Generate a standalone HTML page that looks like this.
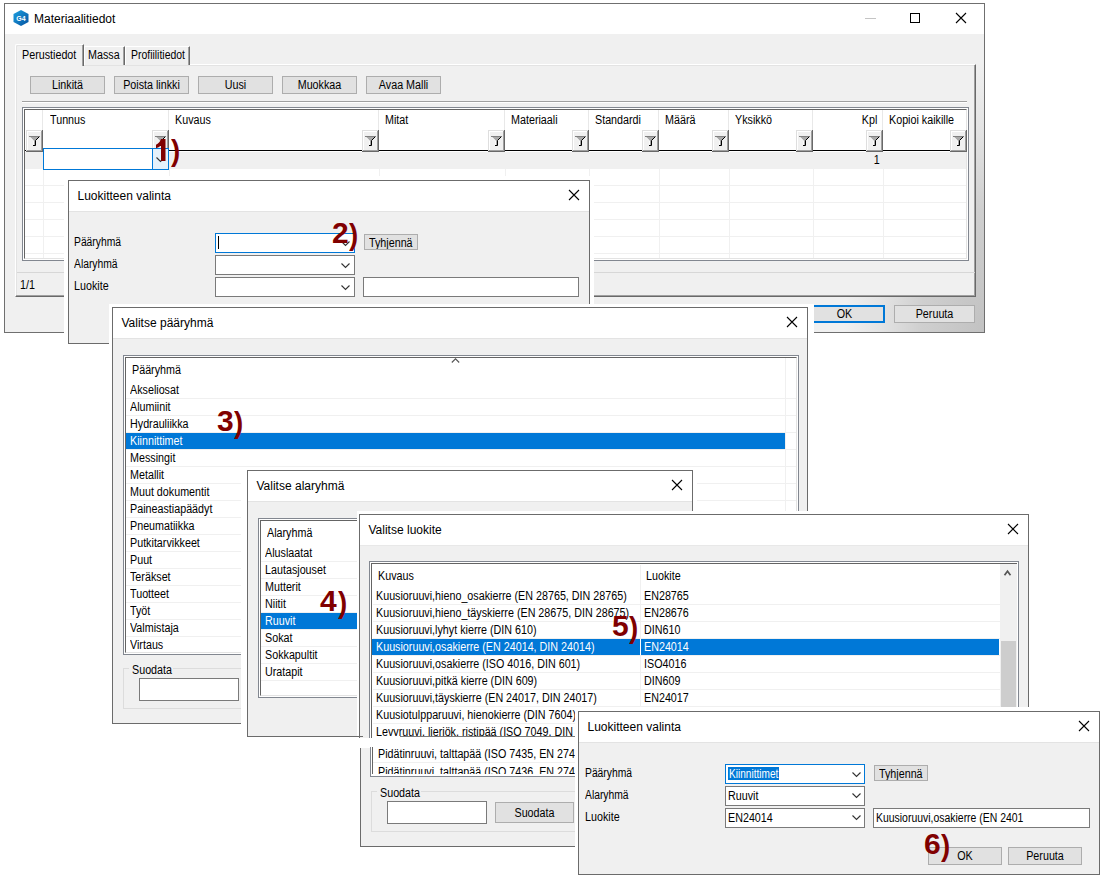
<!DOCTYPE html>
<html><head><meta charset="utf-8"><style>
html,body{margin:0;padding:0;}
body{width:1100px;height:878px;position:relative;overflow:hidden;background:#fff;font-family:"Liberation Sans",sans-serif;}
body>div,body>span,body>svg{position:absolute;}
.t{white-space:pre;}
</style></head><body>
<div style="left:4px;top:3px;width:981px;height:330px;background:radial-gradient(ellipse 140px 270px at 100% 100%,#c2c2c2 0%,#cfcfcf 45%,#e4e4e4 75%,#f0f0f0 100%);border:1px solid #6f6f6f;box-sizing:border-box"></div>
<div style="left:5px;top:4px;width:979px;height:30px;background:#fff"></div>
<svg style="left:13px;top:10px" width="16" height="16"><defs><linearGradient id="g4" x1="0" y1="0" x2="1" y2="1"><stop offset="0" stop-color="#1ea0e0"/><stop offset="1" stop-color="#0452a0"/></linearGradient></defs><path d="M8 0L15.5 4V12L8 16L0.5 12V4Z" fill="url(#g4)"/><text x="8" y="11" font-family="Liberation Sans" font-size="7" font-weight="bold" fill="#fff" text-anchor="middle">G4</text></svg>
<span class="t" style="left:34px;top:12.84px;font-size:12px;line-height:12px;color:#000;letter-spacing:0px;font-weight:normal;transform:scaleX(1.0);transform-origin:0 0;">Materiaalitiedot</span>
<div style="left:865px;top:18px;width:11px;height:1px;background:#c4c4c4"></div>
<div style="left:910px;top:13px;width:10px;height:10px;border:1px solid #000;box-sizing:border-box"></div>
<svg style="left:955.0px;top:12.0px" width="12" height="12"><path d="M1 1L11 11M11 1L1 11" stroke="#000" stroke-width="1.1" fill="none"/></svg>
<div style="left:15px;top:64px;width:961px;height:233px;background:#f0f0f0;border-top:1px solid #fff;border-left:1px solid #fff;border-right:1px solid #696969;border-bottom:1px solid #696969;box-shadow:inset -1px -1px 0 #a0a0a0,inset 1px 1px 0 #e3e3e3;box-sizing:border-box"></div>
<div style="left:84px;top:46px;width:41px;height:19px;background:#f0f0f0;border-top:1px solid #fff;border-left:1px solid #fff;border-right:1px solid #696969;box-shadow:inset -1px 0 0 #a0a0a0;box-sizing:border-box"></div>
<div style="left:125px;top:46px;width:65px;height:19px;background:#f0f0f0;border-top:1px solid #fff;border-left:1px solid #fff;border-right:1px solid #696969;box-shadow:inset -1px 0 0 #a0a0a0;box-sizing:border-box"></div>
<div style="left:15px;top:44px;width:69px;height:22px;background:#f0f0f0;border-top:1px solid #fff;border-left:1px solid #fff;border-right:1px solid #696969;border-top-left-radius:2px;box-shadow:inset -1px 0 0 #a0a0a0,inset 1px 1px 0 #e3e3e3;box-sizing:border-box"></div>
<span class="t" style="left:22px;top:48.84px;font-size:12px;line-height:12px;color:#000;letter-spacing:0px;font-weight:normal;transform:scaleX(0.895);transform-origin:0 0;">Perustiedot</span>
<span class="t" style="left:87.5px;top:48.84px;font-size:12px;line-height:12px;color:#000;letter-spacing:0px;font-weight:normal;transform:scaleX(0.895);transform-origin:0 0;">Massa</span>
<span class="t" style="left:130.5px;top:48.84px;font-size:12px;line-height:12px;color:#000;letter-spacing:0px;font-weight:normal;transform:scaleX(0.87);transform-origin:0 0;">Profiilitiedot</span>
<div style="left:30px;top:76px;width:75px;height:18px;background:#e1e1e1;border:1px solid #adadad;box-sizing:border-box"></div>
<span class="t" style="left:30px;top:78.84px;font-size:12px;line-height:12px;color:#000;letter-spacing:0px;font-weight:normal;transform:scaleX(0.895);transform-origin:50% 0;width:75px;text-align:center;">Linkitä</span>
<div style="left:114px;top:76px;width:75px;height:18px;background:#e1e1e1;border:1px solid #adadad;box-sizing:border-box"></div>
<span class="t" style="left:114px;top:78.84px;font-size:12px;line-height:12px;color:#000;letter-spacing:0px;font-weight:normal;transform:scaleX(0.895);transform-origin:50% 0;width:75px;text-align:center;">Poista linkki</span>
<div style="left:198px;top:76px;width:75px;height:18px;background:#e1e1e1;border:1px solid #adadad;box-sizing:border-box"></div>
<span class="t" style="left:198px;top:78.84px;font-size:12px;line-height:12px;color:#000;letter-spacing:0px;font-weight:normal;transform:scaleX(0.895);transform-origin:50% 0;width:75px;text-align:center;">Uusi</span>
<div style="left:282px;top:76px;width:75px;height:18px;background:#e1e1e1;border:1px solid #adadad;box-sizing:border-box"></div>
<span class="t" style="left:282px;top:78.84px;font-size:12px;line-height:12px;color:#000;letter-spacing:0px;font-weight:normal;transform:scaleX(0.895);transform-origin:50% 0;width:75px;text-align:center;">Muokkaa</span>
<div style="left:366px;top:76px;width:75px;height:18px;background:#e1e1e1;border:1px solid #adadad;box-sizing:border-box"></div>
<span class="t" style="left:366px;top:78.84px;font-size:12px;line-height:12px;color:#000;letter-spacing:0px;font-weight:normal;transform:scaleX(0.895);transform-origin:50% 0;width:75px;text-align:center;">Avaa Malli</span>
<div style="left:22px;top:101px;width:945px;height:1px;background:#a0a0a0"></div>
<div style="left:22px;top:102px;width:945px;height:1px;background:#fff"></div>
<div style="left:22px;top:107px;width:947px;height:154px;background:#fff;border:1px solid #828790;box-sizing:border-box"></div>
<div style="left:24px;top:109px;width:943px;height:150px;background:#fff;border-left:1px solid #646464;border-top:1px solid #646464;border-right:1px solid #e3e3e3;border-bottom:1px solid #e3e3e3;box-sizing:border-box"></div>
<div style="left:25px;top:152px;width:941px;height:17px;background:#f0f0f0"></div>
<div style="left:25px;top:185px;width:941px;height:1px;background:#f0f0f0"></div>
<div style="left:25px;top:202px;width:941px;height:1px;background:#f0f0f0"></div>
<div style="left:25px;top:219px;width:941px;height:1px;background:#f0f0f0"></div>
<div style="left:25px;top:236px;width:941px;height:1px;background:#f0f0f0"></div>
<div style="left:25px;top:253px;width:941px;height:1px;background:#f0f0f0"></div>
<div style="left:42px;top:110px;width:1px;height:41px;background:#e8e8e8"></div>
<div style="left:43px;top:169px;width:1px;height:89px;background:#f0f0f0"></div>
<div style="left:168px;top:110px;width:1px;height:41px;background:#e8e8e8"></div>
<div style="left:169px;top:169px;width:1px;height:89px;background:#f0f0f0"></div>
<div style="left:378px;top:110px;width:1px;height:41px;background:#e8e8e8"></div>
<div style="left:379px;top:169px;width:1px;height:89px;background:#f0f0f0"></div>
<div style="left:504px;top:110px;width:1px;height:41px;background:#e8e8e8"></div>
<div style="left:505px;top:169px;width:1px;height:89px;background:#f0f0f0"></div>
<div style="left:588px;top:110px;width:1px;height:41px;background:#e8e8e8"></div>
<div style="left:589px;top:169px;width:1px;height:89px;background:#f0f0f0"></div>
<div style="left:658px;top:110px;width:1px;height:41px;background:#e8e8e8"></div>
<div style="left:659px;top:169px;width:1px;height:89px;background:#f0f0f0"></div>
<div style="left:728px;top:110px;width:1px;height:41px;background:#e8e8e8"></div>
<div style="left:729px;top:169px;width:1px;height:89px;background:#f0f0f0"></div>
<div style="left:812px;top:110px;width:1px;height:41px;background:#e8e8e8"></div>
<div style="left:813px;top:169px;width:1px;height:89px;background:#f0f0f0"></div>
<div style="left:882px;top:110px;width:1px;height:41px;background:#e8e8e8"></div>
<div style="left:883px;top:169px;width:1px;height:89px;background:#f0f0f0"></div>
<div style="left:25px;top:150px;width:941px;height:1px;background:#000"></div>
<div style="left:26px;top:130px;width:17px;height:22px;background:#f0f0f0"></div>
<div style="left:26px;top:130px;width:1px;height:22px;background:#dedede"></div>
<div style="left:26px;top:130px;width:17px;height:1px;background:#dedede"></div>
<div style="left:27px;top:131px;width:1px;height:20px;background:#fff"></div>
<div style="left:27px;top:131px;width:15px;height:1px;background:#fff"></div>
<div style="left:41px;top:131px;width:1px;height:20px;background:#a0a0a0"></div>
<div style="left:27px;top:150px;width:15px;height:1px;background:#a0a0a0"></div>
<div style="left:42px;top:130px;width:1px;height:22px;background:#696969"></div>
<div style="left:26px;top:151px;width:17px;height:1px;background:#696969"></div>
<svg style="left:26px;top:130px" width="17" height="22"><path d="M3.5 6.5H13.5L9.5 10.5V15.5H7.5V10.5Z" fill="#a8a8a8"/><path d="M3 6.5H13" stroke="#808080" stroke-width="1"/><path d="M3.8 7.2L7.5 10.9V15" stroke="#fafafa" stroke-width="1" fill="none"/><path d="M13.5 6.5L9.5 10.5V15.5H7" stroke="#000" stroke-width="1" fill="none"/></svg>
<div style="left:152px;top:130px;width:17px;height:22px;background:#f0f0f0"></div>
<div style="left:152px;top:130px;width:1px;height:22px;background:#dedede"></div>
<div style="left:152px;top:130px;width:17px;height:1px;background:#dedede"></div>
<div style="left:153px;top:131px;width:1px;height:20px;background:#fff"></div>
<div style="left:153px;top:131px;width:15px;height:1px;background:#fff"></div>
<div style="left:167px;top:131px;width:1px;height:20px;background:#a0a0a0"></div>
<div style="left:153px;top:150px;width:15px;height:1px;background:#a0a0a0"></div>
<div style="left:168px;top:130px;width:1px;height:22px;background:#696969"></div>
<div style="left:152px;top:151px;width:17px;height:1px;background:#696969"></div>
<svg style="left:152px;top:130px" width="17" height="22"><path d="M3.5 6.5H13.5L9.5 10.5V15.5H7.5V10.5Z" fill="#a8a8a8"/><path d="M3 6.5H13" stroke="#808080" stroke-width="1"/><path d="M3.8 7.2L7.5 10.9V15" stroke="#fafafa" stroke-width="1" fill="none"/><path d="M13.5 6.5L9.5 10.5V15.5H7" stroke="#000" stroke-width="1" fill="none"/></svg>
<div style="left:362px;top:130px;width:17px;height:22px;background:#f0f0f0"></div>
<div style="left:362px;top:130px;width:1px;height:22px;background:#dedede"></div>
<div style="left:362px;top:130px;width:17px;height:1px;background:#dedede"></div>
<div style="left:363px;top:131px;width:1px;height:20px;background:#fff"></div>
<div style="left:363px;top:131px;width:15px;height:1px;background:#fff"></div>
<div style="left:377px;top:131px;width:1px;height:20px;background:#a0a0a0"></div>
<div style="left:363px;top:150px;width:15px;height:1px;background:#a0a0a0"></div>
<div style="left:378px;top:130px;width:1px;height:22px;background:#696969"></div>
<div style="left:362px;top:151px;width:17px;height:1px;background:#696969"></div>
<svg style="left:362px;top:130px" width="17" height="22"><path d="M3.5 6.5H13.5L9.5 10.5V15.5H7.5V10.5Z" fill="#a8a8a8"/><path d="M3 6.5H13" stroke="#808080" stroke-width="1"/><path d="M3.8 7.2L7.5 10.9V15" stroke="#fafafa" stroke-width="1" fill="none"/><path d="M13.5 6.5L9.5 10.5V15.5H7" stroke="#000" stroke-width="1" fill="none"/></svg>
<div style="left:488px;top:130px;width:17px;height:22px;background:#f0f0f0"></div>
<div style="left:488px;top:130px;width:1px;height:22px;background:#dedede"></div>
<div style="left:488px;top:130px;width:17px;height:1px;background:#dedede"></div>
<div style="left:489px;top:131px;width:1px;height:20px;background:#fff"></div>
<div style="left:489px;top:131px;width:15px;height:1px;background:#fff"></div>
<div style="left:503px;top:131px;width:1px;height:20px;background:#a0a0a0"></div>
<div style="left:489px;top:150px;width:15px;height:1px;background:#a0a0a0"></div>
<div style="left:504px;top:130px;width:1px;height:22px;background:#696969"></div>
<div style="left:488px;top:151px;width:17px;height:1px;background:#696969"></div>
<svg style="left:488px;top:130px" width="17" height="22"><path d="M3.5 6.5H13.5L9.5 10.5V15.5H7.5V10.5Z" fill="#a8a8a8"/><path d="M3 6.5H13" stroke="#808080" stroke-width="1"/><path d="M3.8 7.2L7.5 10.9V15" stroke="#fafafa" stroke-width="1" fill="none"/><path d="M13.5 6.5L9.5 10.5V15.5H7" stroke="#000" stroke-width="1" fill="none"/></svg>
<div style="left:572px;top:130px;width:17px;height:22px;background:#f0f0f0"></div>
<div style="left:572px;top:130px;width:1px;height:22px;background:#dedede"></div>
<div style="left:572px;top:130px;width:17px;height:1px;background:#dedede"></div>
<div style="left:573px;top:131px;width:1px;height:20px;background:#fff"></div>
<div style="left:573px;top:131px;width:15px;height:1px;background:#fff"></div>
<div style="left:587px;top:131px;width:1px;height:20px;background:#a0a0a0"></div>
<div style="left:573px;top:150px;width:15px;height:1px;background:#a0a0a0"></div>
<div style="left:588px;top:130px;width:1px;height:22px;background:#696969"></div>
<div style="left:572px;top:151px;width:17px;height:1px;background:#696969"></div>
<svg style="left:572px;top:130px" width="17" height="22"><path d="M3.5 6.5H13.5L9.5 10.5V15.5H7.5V10.5Z" fill="#a8a8a8"/><path d="M3 6.5H13" stroke="#808080" stroke-width="1"/><path d="M3.8 7.2L7.5 10.9V15" stroke="#fafafa" stroke-width="1" fill="none"/><path d="M13.5 6.5L9.5 10.5V15.5H7" stroke="#000" stroke-width="1" fill="none"/></svg>
<div style="left:642px;top:130px;width:17px;height:22px;background:#f0f0f0"></div>
<div style="left:642px;top:130px;width:1px;height:22px;background:#dedede"></div>
<div style="left:642px;top:130px;width:17px;height:1px;background:#dedede"></div>
<div style="left:643px;top:131px;width:1px;height:20px;background:#fff"></div>
<div style="left:643px;top:131px;width:15px;height:1px;background:#fff"></div>
<div style="left:657px;top:131px;width:1px;height:20px;background:#a0a0a0"></div>
<div style="left:643px;top:150px;width:15px;height:1px;background:#a0a0a0"></div>
<div style="left:658px;top:130px;width:1px;height:22px;background:#696969"></div>
<div style="left:642px;top:151px;width:17px;height:1px;background:#696969"></div>
<svg style="left:642px;top:130px" width="17" height="22"><path d="M3.5 6.5H13.5L9.5 10.5V15.5H7.5V10.5Z" fill="#a8a8a8"/><path d="M3 6.5H13" stroke="#808080" stroke-width="1"/><path d="M3.8 7.2L7.5 10.9V15" stroke="#fafafa" stroke-width="1" fill="none"/><path d="M13.5 6.5L9.5 10.5V15.5H7" stroke="#000" stroke-width="1" fill="none"/></svg>
<div style="left:712px;top:130px;width:17px;height:22px;background:#f0f0f0"></div>
<div style="left:712px;top:130px;width:1px;height:22px;background:#dedede"></div>
<div style="left:712px;top:130px;width:17px;height:1px;background:#dedede"></div>
<div style="left:713px;top:131px;width:1px;height:20px;background:#fff"></div>
<div style="left:713px;top:131px;width:15px;height:1px;background:#fff"></div>
<div style="left:727px;top:131px;width:1px;height:20px;background:#a0a0a0"></div>
<div style="left:713px;top:150px;width:15px;height:1px;background:#a0a0a0"></div>
<div style="left:728px;top:130px;width:1px;height:22px;background:#696969"></div>
<div style="left:712px;top:151px;width:17px;height:1px;background:#696969"></div>
<svg style="left:712px;top:130px" width="17" height="22"><path d="M3.5 6.5H13.5L9.5 10.5V15.5H7.5V10.5Z" fill="#a8a8a8"/><path d="M3 6.5H13" stroke="#808080" stroke-width="1"/><path d="M3.8 7.2L7.5 10.9V15" stroke="#fafafa" stroke-width="1" fill="none"/><path d="M13.5 6.5L9.5 10.5V15.5H7" stroke="#000" stroke-width="1" fill="none"/></svg>
<div style="left:796px;top:130px;width:17px;height:22px;background:#f0f0f0"></div>
<div style="left:796px;top:130px;width:1px;height:22px;background:#dedede"></div>
<div style="left:796px;top:130px;width:17px;height:1px;background:#dedede"></div>
<div style="left:797px;top:131px;width:1px;height:20px;background:#fff"></div>
<div style="left:797px;top:131px;width:15px;height:1px;background:#fff"></div>
<div style="left:811px;top:131px;width:1px;height:20px;background:#a0a0a0"></div>
<div style="left:797px;top:150px;width:15px;height:1px;background:#a0a0a0"></div>
<div style="left:812px;top:130px;width:1px;height:22px;background:#696969"></div>
<div style="left:796px;top:151px;width:17px;height:1px;background:#696969"></div>
<svg style="left:796px;top:130px" width="17" height="22"><path d="M3.5 6.5H13.5L9.5 10.5V15.5H7.5V10.5Z" fill="#a8a8a8"/><path d="M3 6.5H13" stroke="#808080" stroke-width="1"/><path d="M3.8 7.2L7.5 10.9V15" stroke="#fafafa" stroke-width="1" fill="none"/><path d="M13.5 6.5L9.5 10.5V15.5H7" stroke="#000" stroke-width="1" fill="none"/></svg>
<div style="left:866px;top:130px;width:17px;height:22px;background:#f0f0f0"></div>
<div style="left:866px;top:130px;width:1px;height:22px;background:#dedede"></div>
<div style="left:866px;top:130px;width:17px;height:1px;background:#dedede"></div>
<div style="left:867px;top:131px;width:1px;height:20px;background:#fff"></div>
<div style="left:867px;top:131px;width:15px;height:1px;background:#fff"></div>
<div style="left:881px;top:131px;width:1px;height:20px;background:#a0a0a0"></div>
<div style="left:867px;top:150px;width:15px;height:1px;background:#a0a0a0"></div>
<div style="left:882px;top:130px;width:1px;height:22px;background:#696969"></div>
<div style="left:866px;top:151px;width:17px;height:1px;background:#696969"></div>
<svg style="left:866px;top:130px" width="17" height="22"><path d="M3.5 6.5H13.5L9.5 10.5V15.5H7.5V10.5Z" fill="#a8a8a8"/><path d="M3 6.5H13" stroke="#808080" stroke-width="1"/><path d="M3.8 7.2L7.5 10.9V15" stroke="#fafafa" stroke-width="1" fill="none"/><path d="M13.5 6.5L9.5 10.5V15.5H7" stroke="#000" stroke-width="1" fill="none"/></svg>
<div style="left:950px;top:130px;width:17px;height:22px;background:#f0f0f0"></div>
<div style="left:950px;top:130px;width:1px;height:22px;background:#dedede"></div>
<div style="left:950px;top:130px;width:17px;height:1px;background:#dedede"></div>
<div style="left:951px;top:131px;width:1px;height:20px;background:#fff"></div>
<div style="left:951px;top:131px;width:15px;height:1px;background:#fff"></div>
<div style="left:965px;top:131px;width:1px;height:20px;background:#a0a0a0"></div>
<div style="left:951px;top:150px;width:15px;height:1px;background:#a0a0a0"></div>
<div style="left:966px;top:130px;width:1px;height:22px;background:#696969"></div>
<div style="left:950px;top:151px;width:17px;height:1px;background:#696969"></div>
<svg style="left:950px;top:130px" width="17" height="22"><path d="M3.5 6.5H13.5L9.5 10.5V15.5H7.5V10.5Z" fill="#a8a8a8"/><path d="M3 6.5H13" stroke="#808080" stroke-width="1"/><path d="M3.8 7.2L7.5 10.9V15" stroke="#fafafa" stroke-width="1" fill="none"/><path d="M13.5 6.5L9.5 10.5V15.5H7" stroke="#000" stroke-width="1" fill="none"/></svg>
<span class="t" style="left:49.5px;top:113.84px;font-size:12px;line-height:12px;color:#000;letter-spacing:0px;font-weight:normal;transform:scaleX(0.895);transform-origin:0 0;">Tunnus</span>
<span class="t" style="left:175px;top:113.84px;font-size:12px;line-height:12px;color:#000;letter-spacing:0px;font-weight:normal;transform:scaleX(0.895);transform-origin:0 0;">Kuvaus</span>
<span class="t" style="left:385px;top:113.84px;font-size:12px;line-height:12px;color:#000;letter-spacing:0px;font-weight:normal;transform:scaleX(0.895);transform-origin:0 0;">Mitat</span>
<span class="t" style="left:511px;top:113.84px;font-size:12px;line-height:12px;color:#000;letter-spacing:0px;font-weight:normal;transform:scaleX(0.895);transform-origin:0 0;">Materiaali</span>
<span class="t" style="left:595px;top:113.84px;font-size:12px;line-height:12px;color:#000;letter-spacing:0px;font-weight:normal;transform:scaleX(0.895);transform-origin:0 0;">Standardi</span>
<span class="t" style="left:665px;top:113.84px;font-size:12px;line-height:12px;color:#000;letter-spacing:0px;font-weight:normal;transform:scaleX(0.895);transform-origin:0 0;">Määrä</span>
<span class="t" style="left:735px;top:113.84px;font-size:12px;line-height:12px;color:#000;letter-spacing:0px;font-weight:normal;transform:scaleX(0.895);transform-origin:0 0;">Yksikkö</span>
<span class="t" style="left:889px;top:113.84px;font-size:12px;line-height:12px;color:#000;letter-spacing:0px;font-weight:normal;transform:scaleX(0.895);transform-origin:0 0;">Kopioi kaikille</span>
<span class="t" style="right:223px;top:113.84px;font-size:12px;line-height:12px;color:#000;letter-spacing:0px;font-weight:normal;transform:scaleX(0.895);transform-origin:100% 0;">Kpl</span>
<span class="t" style="right:220px;top:153.84px;font-size:12px;line-height:12px;color:#000;letter-spacing:0px;font-weight:normal;transform:scaleX(0.895);transform-origin:100% 0;">1</span>
<div style="left:43px;top:148px;width:126px;height:22px;background:#fff;border:1px solid #0078d7;box-sizing:border-box"></div>
<div style="left:152px;top:148px;width:17px;height:22px;background:#e5f1fb;border:1px solid #0078d7;box-sizing:border-box"></div>
<svg style="left:156px;top:157px" width="10" height="6"><path d="M0.5 0.5L4.5 4.5L8.5 0.5" stroke="#333" stroke-width="1.1" fill="none"/></svg>
<div style="left:17px;top:272px;width:958px;height:1px;background:#d7d7d7"></div>
<span class="t" style="left:19.5px;top:278.84px;font-size:12px;line-height:12px;color:#000;letter-spacing:0px;font-weight:normal;transform:scaleX(0.895);transform-origin:0 0;">1/1</span>
<div style="left:804px;top:305px;width:81px;height:18px;background:#e1e1e1;border:2px solid #0078d7;box-sizing:border-box"></div>
<span class="t" style="left:804px;top:308.34px;font-size:12px;line-height:12px;color:#000;letter-spacing:0px;font-weight:normal;transform:scaleX(0.895);transform-origin:50% 0;width:81px;text-align:center;">OK</span>
<div style="left:894px;top:305px;width:81px;height:18px;background:#e1e1e1;border:1px solid #adadad;box-sizing:border-box"></div>
<span class="t" style="left:894px;top:308.34px;font-size:12px;line-height:12px;color:#000;letter-spacing:0px;font-weight:normal;transform:scaleX(0.895);transform-origin:50% 0;width:81px;text-align:center;">Peruuta</span>
<div style="left:64px;top:176px;width:530px;height:172px;background:#fff"></div>
<div style="left:68px;top:180px;width:522px;height:164px;background:#f0f0f0;border:1px solid #6b6b6b;border-bottom:0;border-bottom:1px solid #6b6b6b;box-sizing:border-box"></div>
<div style="left:69px;top:181px;width:520px;height:30px;background:#fff"></div>
<div style="left:69px;top:211px;width:520px;height:1px;background:#e3e3e3"></div>
<span class="t" style="left:77.5px;top:189.84px;font-size:12px;line-height:12px;color:#000;letter-spacing:0px;font-weight:normal;transform:scaleX(1.0);transform-origin:0 0;">Luokitteen valinta</span>
<svg style="left:567.5px;top:189.0px" width="12" height="12"><path d="M1 1L11 11M11 1L1 11" stroke="#000" stroke-width="1.1" fill="none"/></svg>
<span class="t" style="left:74px;top:235.84px;font-size:12px;line-height:12px;color:#000;letter-spacing:0px;font-weight:normal;transform:scaleX(0.86);transform-origin:0 0;">Pääryhmä</span>
<span class="t" style="left:74px;top:257.84px;font-size:12px;line-height:12px;color:#000;letter-spacing:0px;font-weight:normal;transform:scaleX(0.86);transform-origin:0 0;">Alaryhmä</span>
<span class="t" style="left:74px;top:279.84px;font-size:12px;line-height:12px;color:#000;letter-spacing:0px;font-weight:normal;transform:scaleX(0.895);transform-origin:0 0;">Luokite</span>
<div style="left:215px;top:233px;width:140px;height:20px;background:#fff;border:1px solid #0078d7;box-sizing:border-box"></div>
<div style="left:215px;top:255px;width:140px;height:20px;background:#fff;border:1px solid #7a7a7a;box-sizing:border-box"></div>
<div style="left:215px;top:277px;width:140px;height:20px;background:#fff;border:1px solid #7a7a7a;box-sizing:border-box"></div>
<div style="left:218px;top:236px;width:1px;height:13px;background:#000"></div>
<svg style="left:341px;top:241px" width="10" height="6"><path d="M0.5 0.5L4.5 4.5L8.5 0.5" stroke="#333" stroke-width="1.1" fill="none"/></svg>
<svg style="left:341px;top:263px" width="10" height="6"><path d="M0.5 0.5L4.5 4.5L8.5 0.5" stroke="#333" stroke-width="1.1" fill="none"/></svg>
<svg style="left:341px;top:285px" width="10" height="6"><path d="M0.5 0.5L4.5 4.5L8.5 0.5" stroke="#333" stroke-width="1.1" fill="none"/></svg>
<div style="left:364px;top:234px;width:54px;height:16px;background:#e1e1e1;border:1px solid #adadad;box-sizing:border-box"></div>
<div style="left:365px;top:235px;width:52px;height:14px;overflow:hidden"><span class="t" style="left:4px;top:1.84px;font-size:12px;line-height:12px;color:#000;letter-spacing:0px;font-weight:normal;transform:scaleX(0.895);transform-origin:0 0;position:absolute;">Tyhjennä</span></div>
<div style="left:363px;top:277px;width:216px;height:20px;background:#fff;border:1px solid #7a7a7a;box-sizing:border-box"></div>
<div style="left:109px;top:304px;width:705px;height:424px;background:#fff"></div>
<div style="left:112px;top:307px;width:696px;height:417px;background:#f0f0f0;border:1px solid #6b6b6b;border-bottom:0;border-bottom:1px solid #6b6b6b;box-sizing:border-box"></div>
<div style="left:113px;top:308px;width:694px;height:30px;background:#fff"></div>
<div style="left:113px;top:338px;width:694px;height:1px;background:#e3e3e3"></div>
<span class="t" style="left:121.5px;top:316.84px;font-size:12px;line-height:12px;color:#000;letter-spacing:0px;font-weight:normal;transform:scaleX(1.0);transform-origin:0 0;">Valitse pääryhmä</span>
<svg style="left:785.5px;top:316.0px" width="12" height="12"><path d="M1 1L11 11M11 1L1 11" stroke="#000" stroke-width="1.1" fill="none"/></svg>
<div style="left:123px;top:355px;width:676px;height:300px;background:#fff;border:1px solid #828790;box-sizing:border-box"></div>
<div style="left:125px;top:357px;width:672px;height:296px;background:#fff;border-left:1px solid #646464;border-top:1px solid #646464;border-right:1px solid #e3e3e3;border-bottom:1px solid #e3e3e3;box-sizing:border-box"></div>
<span class="t" style="left:132px;top:363.84px;font-size:12px;line-height:12px;color:#000;letter-spacing:0px;font-weight:normal;transform:scaleX(0.895);transform-origin:0 0;">Pääryhmä</span>
<svg style="left:451px;top:357px" width="10" height="7"><path d="M0.8 5.5L4.5 1.8L8.2 5.5" stroke="#555" stroke-width="1.1" fill="none"/></svg>
<div style="left:785px;top:358px;width:1px;height:295px;background:#f0f0f0"></div>
<div style="left:126px;top:398px;width:670px;height:1px;background:#f0f0f0"></div>
<div style="left:126px;top:358px;width:659px;height:294px;overflow:hidden"><span class="t" style="left:4px;top:26.34px;font-size:12px;line-height:12px;color:#000;letter-spacing:0px;font-weight:normal;transform:scaleX(0.895);transform-origin:0 0;position:absolute;">Akseliosat</span></div>
<div style="left:126px;top:415px;width:670px;height:1px;background:#f0f0f0"></div>
<div style="left:126px;top:358px;width:659px;height:294px;overflow:hidden"><span class="t" style="left:4px;top:43.34px;font-size:12px;line-height:12px;color:#000;letter-spacing:0px;font-weight:normal;transform:scaleX(0.895);transform-origin:0 0;position:absolute;">Alumiinit</span></div>
<div style="left:126px;top:432px;width:670px;height:1px;background:#f0f0f0"></div>
<div style="left:126px;top:358px;width:659px;height:294px;overflow:hidden"><span class="t" style="left:4px;top:60.34px;font-size:12px;line-height:12px;color:#000;letter-spacing:0px;font-weight:normal;transform:scaleX(0.895);transform-origin:0 0;position:absolute;">Hydrauliikka</span></div>
<div style="left:126px;top:449px;width:670px;height:1px;background:#f0f0f0"></div>
<div style="left:126px;top:433px;width:659px;height:16px;background:#0078d7"></div>
<span class="t" style="left:130px;top:435.34px;font-size:12px;line-height:12px;color:#fff;letter-spacing:0px;font-weight:normal;transform:scaleX(0.895);transform-origin:0 0;">Kiinnittimet</span>
<div style="left:126px;top:466px;width:670px;height:1px;background:#f0f0f0"></div>
<div style="left:126px;top:358px;width:659px;height:294px;overflow:hidden"><span class="t" style="left:4px;top:94.34px;font-size:12px;line-height:12px;color:#000;letter-spacing:0px;font-weight:normal;transform:scaleX(0.895);transform-origin:0 0;position:absolute;">Messingit</span></div>
<div style="left:126px;top:483px;width:670px;height:1px;background:#f0f0f0"></div>
<div style="left:126px;top:358px;width:659px;height:294px;overflow:hidden"><span class="t" style="left:4px;top:111.34px;font-size:12px;line-height:12px;color:#000;letter-spacing:0px;font-weight:normal;transform:scaleX(0.895);transform-origin:0 0;position:absolute;">Metallit</span></div>
<div style="left:126px;top:500px;width:670px;height:1px;background:#f0f0f0"></div>
<div style="left:126px;top:358px;width:659px;height:294px;overflow:hidden"><span class="t" style="left:4px;top:128.34px;font-size:12px;line-height:12px;color:#000;letter-spacing:0px;font-weight:normal;transform:scaleX(0.895);transform-origin:0 0;position:absolute;">Muut dokumentit</span></div>
<div style="left:126px;top:517px;width:670px;height:1px;background:#f0f0f0"></div>
<div style="left:126px;top:358px;width:659px;height:294px;overflow:hidden"><span class="t" style="left:4px;top:145.34px;font-size:12px;line-height:12px;color:#000;letter-spacing:0px;font-weight:normal;transform:scaleX(0.895);transform-origin:0 0;position:absolute;">Paineastiapäädyt</span></div>
<div style="left:126px;top:534px;width:670px;height:1px;background:#f0f0f0"></div>
<div style="left:126px;top:358px;width:659px;height:294px;overflow:hidden"><span class="t" style="left:4px;top:162.34px;font-size:12px;line-height:12px;color:#000;letter-spacing:0px;font-weight:normal;transform:scaleX(0.895);transform-origin:0 0;position:absolute;">Pneumatiikka</span></div>
<div style="left:126px;top:551px;width:670px;height:1px;background:#f0f0f0"></div>
<div style="left:126px;top:358px;width:659px;height:294px;overflow:hidden"><span class="t" style="left:4px;top:179.34px;font-size:12px;line-height:12px;color:#000;letter-spacing:0px;font-weight:normal;transform:scaleX(0.895);transform-origin:0 0;position:absolute;">Putkitarvikkeet</span></div>
<div style="left:126px;top:568px;width:670px;height:1px;background:#f0f0f0"></div>
<div style="left:126px;top:358px;width:659px;height:294px;overflow:hidden"><span class="t" style="left:4px;top:196.34px;font-size:12px;line-height:12px;color:#000;letter-spacing:0px;font-weight:normal;transform:scaleX(0.895);transform-origin:0 0;position:absolute;">Puut</span></div>
<div style="left:126px;top:585px;width:670px;height:1px;background:#f0f0f0"></div>
<div style="left:126px;top:358px;width:659px;height:294px;overflow:hidden"><span class="t" style="left:4px;top:213.34px;font-size:12px;line-height:12px;color:#000;letter-spacing:0px;font-weight:normal;transform:scaleX(0.895);transform-origin:0 0;position:absolute;">Teräkset</span></div>
<div style="left:126px;top:602px;width:670px;height:1px;background:#f0f0f0"></div>
<div style="left:126px;top:358px;width:659px;height:294px;overflow:hidden"><span class="t" style="left:4px;top:230.34px;font-size:12px;line-height:12px;color:#000;letter-spacing:0px;font-weight:normal;transform:scaleX(0.895);transform-origin:0 0;position:absolute;">Tuotteet</span></div>
<div style="left:126px;top:619px;width:670px;height:1px;background:#f0f0f0"></div>
<div style="left:126px;top:358px;width:659px;height:294px;overflow:hidden"><span class="t" style="left:4px;top:247.34px;font-size:12px;line-height:12px;color:#000;letter-spacing:0px;font-weight:normal;transform:scaleX(0.895);transform-origin:0 0;position:absolute;">Työt</span></div>
<div style="left:126px;top:636px;width:670px;height:1px;background:#f0f0f0"></div>
<div style="left:126px;top:358px;width:659px;height:294px;overflow:hidden"><span class="t" style="left:4px;top:264.34px;font-size:12px;line-height:12px;color:#000;letter-spacing:0px;font-weight:normal;transform:scaleX(0.895);transform-origin:0 0;position:absolute;">Valmistaja</span></div>
<div style="left:126px;top:358px;width:659px;height:294px;overflow:hidden"><span class="t" style="left:4px;top:281.34px;font-size:12px;line-height:12px;color:#000;letter-spacing:0px;font-weight:normal;transform:scaleX(0.895);transform-origin:0 0;position:absolute;">Virtaus</span></div>
<div style="left:123px;top:668px;width:124px;height:41px;border:1px solid #dcdcdc;box-sizing:border-box"></div>
<div style="left:129px;top:664px;width:44px;height:11px;background:#f0f0f0"></div>
<span class="t" style="left:132px;top:663.84px;font-size:12px;line-height:12px;color:#000;letter-spacing:0px;font-weight:normal;transform:scaleX(0.895);transform-origin:0 0;">Suodata</span>
<div style="left:139px;top:678px;width:100px;height:23px;background:#fff;border:1px solid #7a7a7a;box-sizing:border-box"></div>
<div style="left:241px;top:467px;width:456px;height:274px;background:#fff"></div>
<div style="left:247px;top:470px;width:446px;height:267px;background:#f0f0f0;border:1px solid #6b6b6b;border-bottom:0;border-bottom:1px solid #6b6b6b;box-sizing:border-box"></div>
<div style="left:248px;top:471px;width:444px;height:30px;background:#fff"></div>
<div style="left:248px;top:501px;width:444px;height:1px;background:#e3e3e3"></div>
<span class="t" style="left:256.5px;top:479.84px;font-size:12px;line-height:12px;color:#000;letter-spacing:0px;font-weight:normal;transform:scaleX(1.0);transform-origin:0 0;">Valitse alaryhmä</span>
<svg style="left:670.5px;top:479.0px" width="12" height="12"><path d="M1 1L11 11M11 1L1 11" stroke="#000" stroke-width="1.1" fill="none"/></svg>
<div style="left:258px;top:518px;width:433px;height:180px;background:#fff;border:1px solid #828790;box-sizing:border-box"></div>
<div style="left:260px;top:520px;width:429px;height:176px;background:#fff;border-left:1px solid #646464;border-top:1px solid #646464;border-right:1px solid #e3e3e3;border-bottom:1px solid #e3e3e3;box-sizing:border-box"></div>
<span class="t" style="left:267px;top:526.84px;font-size:12px;line-height:12px;color:#000;letter-spacing:0px;font-weight:normal;transform:scaleX(0.895);transform-origin:0 0;">Alaryhmä</span>
<div style="left:261px;top:561px;width:428px;height:1px;background:#f0f0f0"></div>
<span class="t" style="left:265px;top:547.34px;font-size:12px;line-height:12px;color:#000;letter-spacing:0px;font-weight:normal;transform:scaleX(0.895);transform-origin:0 0;">Aluslaatat</span>
<div style="left:261px;top:578px;width:428px;height:1px;background:#f0f0f0"></div>
<span class="t" style="left:265px;top:564.34px;font-size:12px;line-height:12px;color:#000;letter-spacing:0px;font-weight:normal;transform:scaleX(0.895);transform-origin:0 0;">Lautasjouset</span>
<div style="left:261px;top:595px;width:428px;height:1px;background:#f0f0f0"></div>
<span class="t" style="left:265px;top:581.34px;font-size:12px;line-height:12px;color:#000;letter-spacing:0px;font-weight:normal;transform:scaleX(0.895);transform-origin:0 0;">Mutterit</span>
<div style="left:261px;top:612px;width:428px;height:1px;background:#f0f0f0"></div>
<span class="t" style="left:265px;top:598.34px;font-size:12px;line-height:12px;color:#000;letter-spacing:0px;font-weight:normal;transform:scaleX(0.895);transform-origin:0 0;">Niitit</span>
<div style="left:261px;top:629px;width:428px;height:1px;background:#f0f0f0"></div>
<div style="left:261px;top:613px;width:428px;height:16px;background:#0078d7"></div>
<span class="t" style="left:265px;top:615.34px;font-size:12px;line-height:12px;color:#fff;letter-spacing:0px;font-weight:normal;transform:scaleX(0.895);transform-origin:0 0;">Ruuvit</span>
<div style="left:261px;top:646px;width:428px;height:1px;background:#f0f0f0"></div>
<span class="t" style="left:265px;top:632.34px;font-size:12px;line-height:12px;color:#000;letter-spacing:0px;font-weight:normal;transform:scaleX(0.895);transform-origin:0 0;">Sokat</span>
<div style="left:261px;top:663px;width:428px;height:1px;background:#f0f0f0"></div>
<span class="t" style="left:265px;top:649.34px;font-size:12px;line-height:12px;color:#000;letter-spacing:0px;font-weight:normal;transform:scaleX(0.895);transform-origin:0 0;">Sokkapultit</span>
<div style="left:261px;top:680px;width:428px;height:1px;background:#f0f0f0"></div>
<span class="t" style="left:265px;top:666.34px;font-size:12px;line-height:12px;color:#000;letter-spacing:0px;font-weight:normal;transform:scaleX(0.895);transform-origin:0 0;">Uratapit</span>
<div style="left:357px;top:511px;width:676px;height:227px;background:#fff"></div>
<div style="left:359px;top:514px;width:670px;height:224px;background:#f0f0f0;border:1px solid #6b6b6b;border-bottom:0;box-sizing:border-box"></div>
<div style="left:360px;top:515px;width:668px;height:30px;background:#fff"></div>
<div style="left:360px;top:545px;width:668px;height:1px;background:#e8e8e8"></div>
<span class="t" style="left:368.5px;top:523.84px;font-size:12px;line-height:12px;color:#000;letter-spacing:0px;font-weight:normal;transform:scaleX(1.0);transform-origin:0 0;">Valitse luokite</span>
<svg style="left:1006.5px;top:523.0px" width="12" height="12"><path d="M1 1L11 11M11 1L1 11" stroke="#000" stroke-width="1.1" fill="none"/></svg>
<div style="left:369px;top:561px;width:650px;height:177px;background:#fff;border:1px solid #828790;border-bottom:0;box-sizing:border-box"></div>
<div style="left:371px;top:563px;width:646px;height:175px;background:#fff;border-left:1px solid #646464;border-top:1px solid #646464;box-sizing:border-box"></div>
<div style="left:640px;top:565px;width:1px;height:173px;background:#f0f0f0"></div>
<span class="t" style="left:378px;top:569.84px;font-size:12px;line-height:12px;color:#000;letter-spacing:0px;font-weight:normal;transform:scaleX(0.895);transform-origin:0 0;">Kuvaus</span>
<span class="t" style="left:646px;top:569.84px;font-size:12px;line-height:12px;color:#000;letter-spacing:0px;font-weight:normal;transform:scaleX(0.895);transform-origin:0 0;">Luokite</span>
<div style="left:373px;top:604px;width:627px;height:1px;background:#f0f0f0"></div>
<div style="left:373px;top:564px;width:267px;height:172px;overflow:hidden"><span class="t" style="left:3px;top:26.34px;font-size:12px;line-height:12px;color:#000;letter-spacing:0px;font-weight:normal;transform:scaleX(0.895);transform-origin:0 0;position:absolute;">Kuusioruuvi,hieno_osakierre (EN 28765, DIN 28765)</span></div>
<div style="left:641px;top:564px;width:359px;height:172px;overflow:hidden"><span class="t" style="left:2.5px;top:26.34px;font-size:12px;line-height:12px;color:#000;letter-spacing:0px;font-weight:normal;transform:scaleX(0.895);transform-origin:0 0;position:absolute;">EN28765</span></div>
<div style="left:373px;top:621px;width:627px;height:1px;background:#f0f0f0"></div>
<div style="left:373px;top:564px;width:267px;height:172px;overflow:hidden"><span class="t" style="left:3px;top:43.34px;font-size:12px;line-height:12px;color:#000;letter-spacing:0px;font-weight:normal;transform:scaleX(0.895);transform-origin:0 0;position:absolute;">Kuusioruuvi,hieno_täyskierre (EN 28675, DIN 28675)</span></div>
<div style="left:641px;top:564px;width:359px;height:172px;overflow:hidden"><span class="t" style="left:2.5px;top:43.34px;font-size:12px;line-height:12px;color:#000;letter-spacing:0px;font-weight:normal;transform:scaleX(0.895);transform-origin:0 0;position:absolute;">EN28676</span></div>
<div style="left:373px;top:638px;width:627px;height:1px;background:#f0f0f0"></div>
<div style="left:373px;top:564px;width:267px;height:172px;overflow:hidden"><span class="t" style="left:3px;top:60.34px;font-size:12px;line-height:12px;color:#000;letter-spacing:0px;font-weight:normal;transform:scaleX(0.895);transform-origin:0 0;position:absolute;">Kuusioruuvi,lyhyt kierre (DIN 610)</span></div>
<div style="left:641px;top:564px;width:359px;height:172px;overflow:hidden"><span class="t" style="left:2.5px;top:60.34px;font-size:12px;line-height:12px;color:#000;letter-spacing:0px;font-weight:normal;transform:scaleX(0.895);transform-origin:0 0;position:absolute;">DIN610</span></div>
<div style="left:373px;top:655px;width:627px;height:1px;background:#f0f0f0"></div>
<div style="left:372px;top:639px;width:627px;height:16px;background:#0078d7"></div>
<div style="left:640px;top:639px;width:1px;height:16px;background:#fff"></div>
<span class="t" style="left:376px;top:641.34px;font-size:12px;line-height:12px;color:#fff;letter-spacing:0px;font-weight:normal;transform:scaleX(0.895);transform-origin:0 0;">Kuusioruuvi,osakierre (EN 24014, DIN 24014)</span>
<span class="t" style="left:643.5px;top:641.34px;font-size:12px;line-height:12px;color:#fff;letter-spacing:0px;font-weight:normal;transform:scaleX(0.895);transform-origin:0 0;">EN24014</span>
<div style="left:373px;top:672px;width:627px;height:1px;background:#f0f0f0"></div>
<div style="left:373px;top:564px;width:267px;height:172px;overflow:hidden"><span class="t" style="left:3px;top:94.34px;font-size:12px;line-height:12px;color:#000;letter-spacing:0px;font-weight:normal;transform:scaleX(0.895);transform-origin:0 0;position:absolute;">Kuusioruuvi,osakierre (ISO 4016, DIN 601)</span></div>
<div style="left:641px;top:564px;width:359px;height:172px;overflow:hidden"><span class="t" style="left:2.5px;top:94.34px;font-size:12px;line-height:12px;color:#000;letter-spacing:0px;font-weight:normal;transform:scaleX(0.895);transform-origin:0 0;position:absolute;">ISO4016</span></div>
<div style="left:373px;top:689px;width:627px;height:1px;background:#f0f0f0"></div>
<div style="left:373px;top:564px;width:267px;height:172px;overflow:hidden"><span class="t" style="left:3px;top:111.34px;font-size:12px;line-height:12px;color:#000;letter-spacing:0px;font-weight:normal;transform:scaleX(0.895);transform-origin:0 0;position:absolute;">Kuusioruuvi,pitkä kierre (DIN 609)</span></div>
<div style="left:641px;top:564px;width:359px;height:172px;overflow:hidden"><span class="t" style="left:2.5px;top:111.34px;font-size:12px;line-height:12px;color:#000;letter-spacing:0px;font-weight:normal;transform:scaleX(0.895);transform-origin:0 0;position:absolute;">DIN609</span></div>
<div style="left:373px;top:706px;width:627px;height:1px;background:#f0f0f0"></div>
<div style="left:373px;top:564px;width:267px;height:172px;overflow:hidden"><span class="t" style="left:3px;top:128.34px;font-size:12px;line-height:12px;color:#000;letter-spacing:0px;font-weight:normal;transform:scaleX(0.895);transform-origin:0 0;position:absolute;">Kuusioruuvi,täyskierre (EN 24017, DIN 24017)</span></div>
<div style="left:641px;top:564px;width:359px;height:172px;overflow:hidden"><span class="t" style="left:2.5px;top:128.34px;font-size:12px;line-height:12px;color:#000;letter-spacing:0px;font-weight:normal;transform:scaleX(0.895);transform-origin:0 0;position:absolute;">EN24017</span></div>
<div style="left:373px;top:723px;width:627px;height:1px;background:#f0f0f0"></div>
<div style="left:373px;top:564px;width:267px;height:172px;overflow:hidden"><span class="t" style="left:3px;top:145.34px;font-size:12px;line-height:12px;color:#000;letter-spacing:0px;font-weight:normal;transform:scaleX(0.895);transform-origin:0 0;position:absolute;">Kuusiotulpparuuvi, hienokierre (DIN 7604)</span></div>
<div style="left:641px;top:564px;width:359px;height:172px;overflow:hidden"><span class="t" style="left:2.5px;top:145.34px;font-size:12px;line-height:12px;color:#000;letter-spacing:0px;font-weight:normal;transform:scaleX(0.895);transform-origin:0 0;position:absolute;">EN27604</span></div>
<div style="left:373px;top:564px;width:267px;height:172px;overflow:hidden"><span class="t" style="left:3px;top:162.34px;font-size:12px;line-height:12px;color:#000;letter-spacing:0px;font-weight:normal;transform:scaleX(0.895);transform-origin:0 0;position:absolute;">Levyruuvi, lieriök, ristipää (ISO 7049, DIN 7981)</span></div>
<div style="left:641px;top:564px;width:359px;height:172px;overflow:hidden"><span class="t" style="left:2.5px;top:162.34px;font-size:12px;line-height:12px;color:#000;letter-spacing:0px;font-weight:normal;transform:scaleX(0.895);transform-origin:0 0;position:absolute;">ISO7049</span></div>
<div style="left:1000px;top:564px;width:17px;height:174px;background:#f0f0f0"></div>
<svg style="left:1003px;top:569px" width="10" height="8"><path d="M1.5 6.2L4.5 2.2L7.5 6.2" stroke="#555" stroke-width="1.7" fill="none"/></svg>
<div style="left:1001px;top:641px;width:15px;height:97px;background:#cdcdcd"></div>
<div style="left:340px;top:738px;width:238px;height:9px;background:#fff"></div>
<div style="left:400px;top:736px;width:176px;height:1px;background:#7a7a7a"></div>
<div style="left:247px;top:736px;width:116px;height:1px;background:#6b6b6b"></div>
<div style="left:360px;top:748px;width:218px;height:99px;background:#f0f0f0;border-left:1px solid #6b6b6b;border-bottom:1px solid #6b6b6b;box-sizing:border-box"></div>
<div style="left:370px;top:747px;width:208px;height:30px;background:#fff;border-left:1px solid #828790;border-bottom:1px solid #828790;box-sizing:border-box"></div>
<div style="left:372px;top:747px;width:1px;height:27px;background:#646464"></div>
<div style="left:373px;top:762px;width:205px;height:1px;background:#f0f0f0"></div>
<div style="left:373px;top:747px;width:205px;height:27px;overflow:hidden"><span class="t" style="left:4.5px;top:0.84px;font-size:12px;line-height:12px;color:#000;letter-spacing:0px;font-weight:normal;transform:scaleX(0.895);transform-origin:0 0;position:absolute;">Pidätinruuvi, talttapää (ISO 7435, EN 27435)</span></div>
<div style="left:373px;top:747px;width:205px;height:27px;overflow:hidden"><span class="t" style="left:4.5px;top:18.84px;font-size:12px;line-height:12px;color:#000;letter-spacing:0px;font-weight:normal;transform:scaleX(0.895);transform-origin:0 0;position:absolute;">Pidätinruuvi, talttapää (ISO 7436, EN 27436)</span></div>
<div style="left:371px;top:791px;width:207px;height:41px;border:1px solid #dcdcdc;box-sizing:border-box"></div>
<div style="left:377px;top:787px;width:44px;height:11px;background:#f0f0f0"></div>
<span class="t" style="left:380px;top:786.84px;font-size:12px;line-height:12px;color:#000;letter-spacing:0px;font-weight:normal;transform:scaleX(0.895);transform-origin:0 0;">Suodata</span>
<div style="left:387px;top:801px;width:100px;height:23px;background:#fff;border:1px solid #7a7a7a;box-sizing:border-box"></div>
<div style="left:495px;top:802px;width:79px;height:21px;background:#e1e1e1;border:1px solid #adadad;box-sizing:border-box"></div>
<span class="t" style="left:495px;top:806.84px;font-size:12px;line-height:12px;color:#000;letter-spacing:0px;font-weight:normal;transform:scaleX(0.895);transform-origin:50% 0;width:79px;text-align:center;">Suodata</span>
<div style="left:575px;top:707px;width:526px;height:171px;background:#fff"></div>
<div style="left:578px;top:711px;width:522px;height:164px;background:#f0f0f0;border:1px solid #6b6b6b;border-bottom:0;border-bottom:1px solid #6b6b6b;box-sizing:border-box"></div>
<div style="left:579px;top:712px;width:520px;height:30px;background:#fff"></div>
<div style="left:579px;top:742px;width:520px;height:1px;background:#e3e3e3"></div>
<span class="t" style="left:587.5px;top:720.84px;font-size:12px;line-height:12px;color:#000;letter-spacing:0px;font-weight:normal;transform:scaleX(1.0);transform-origin:0 0;">Luokitteen valinta</span>
<svg style="left:1077.5px;top:720.0px" width="12" height="12"><path d="M1 1L11 11M11 1L1 11" stroke="#000" stroke-width="1.1" fill="none"/></svg>
<span class="t" style="left:585px;top:766.84px;font-size:12px;line-height:12px;color:#000;letter-spacing:0px;font-weight:normal;transform:scaleX(0.86);transform-origin:0 0;">Pääryhmä</span>
<span class="t" style="left:585px;top:788.84px;font-size:12px;line-height:12px;color:#000;letter-spacing:0px;font-weight:normal;transform:scaleX(0.86);transform-origin:0 0;">Alaryhmä</span>
<span class="t" style="left:585px;top:810.84px;font-size:12px;line-height:12px;color:#000;letter-spacing:0px;font-weight:normal;transform:scaleX(0.895);transform-origin:0 0;">Luokite</span>
<div style="left:725px;top:764px;width:140px;height:20px;background:#fff;border:1px solid #0078d7;box-sizing:border-box"></div>
<div style="left:725px;top:786px;width:140px;height:20px;background:#fff;border:1px solid #7a7a7a;box-sizing:border-box"></div>
<div style="left:725px;top:808px;width:140px;height:20px;background:#fff;border:1px solid #7a7a7a;box-sizing:border-box"></div>
<div style="left:728px;top:767px;width:51px;height:13px;background:#0078d7"></div>
<span class="t" style="left:728.5px;top:767.84px;font-size:12px;line-height:12px;color:#fff;letter-spacing:0px;font-weight:normal;transform:scaleX(0.84);transform-origin:0 0;">Kiinnittimet</span>
<span class="t" style="left:728px;top:790.34px;font-size:12px;line-height:12px;color:#000;letter-spacing:0px;font-weight:normal;transform:scaleX(0.895);transform-origin:0 0;">Ruuvit</span>
<span class="t" style="left:728px;top:811.84px;font-size:12px;line-height:12px;color:#000;letter-spacing:0px;font-weight:normal;transform:scaleX(0.895);transform-origin:0 0;">EN24014</span>
<svg style="left:852px;top:772px" width="10" height="6"><path d="M0.5 0.5L4.5 4.5L8.5 0.5" stroke="#333" stroke-width="1.1" fill="none"/></svg>
<svg style="left:852px;top:793px" width="10" height="6"><path d="M0.5 0.5L4.5 4.5L8.5 0.5" stroke="#333" stroke-width="1.1" fill="none"/></svg>
<svg style="left:852px;top:815px" width="10" height="6"><path d="M0.5 0.5L4.5 4.5L8.5 0.5" stroke="#333" stroke-width="1.1" fill="none"/></svg>
<div style="left:874px;top:765px;width:54px;height:16px;background:#e1e1e1;border:1px solid #adadad;box-sizing:border-box"></div>
<div style="left:875px;top:766px;width:52px;height:14px;overflow:hidden"><span class="t" style="left:4px;top:1.84px;font-size:12px;line-height:12px;color:#000;letter-spacing:0px;font-weight:normal;transform:scaleX(0.895);transform-origin:0 0;position:absolute;">Tyhjennä</span></div>
<div style="left:873px;top:808px;width:217px;height:20px;background:#fff;border:1px solid #7a7a7a;box-sizing:border-box"></div>
<span class="t" style="left:876px;top:811.84px;font-size:12px;line-height:12px;color:#000;letter-spacing:0px;font-weight:normal;transform:scaleX(0.87);transform-origin:0 0;">Kuusioruuvi,osakierre (EN 2401</span>
<div style="left:928px;top:847px;width:74px;height:18px;background:#e1e1e1;border:1px solid #adadad;box-sizing:border-box"></div>
<span class="t" style="left:928px;top:850.34px;font-size:12px;line-height:12px;color:#000;letter-spacing:0px;font-weight:normal;transform:scaleX(0.895);transform-origin:50% 0;width:74px;text-align:center;">OK</span>
<div style="left:1008px;top:847px;width:74px;height:18px;background:#e1e1e1;border:1px solid #adadad;box-sizing:border-box"></div>
<span class="t" style="left:1008px;top:850.34px;font-size:12px;line-height:12px;color:#000;letter-spacing:0px;font-weight:normal;transform:scaleX(0.895);transform-origin:50% 0;width:74px;text-align:center;">Peruuta</span>
<svg style="left:155px;top:138px" width="12" height="24"><path d="M6 1H10.5V23H6V7.5Q3.5 9.5 1 10.2V6.8Q4.5 5.3 6 1Z" fill="#800000"/></svg>
<span class="t" style="left:171px;top:136.00px;font-size:30px;line-height:30px;color:#800000;letter-spacing:0px;font-weight:bold;transform:scaleX(0.92);transform-origin:0 0;">)</span>
<span class="t" style="left:332px;top:218.00px;font-size:30px;line-height:30px;color:#800000;letter-spacing:0px;font-weight:bold;transform:scaleX(1.0);transform-origin:0 0;">2</span>
<span class="t" style="left:349px;top:220.00px;font-size:30px;line-height:30px;color:#800000;letter-spacing:0px;font-weight:bold;transform:scaleX(0.92);transform-origin:0 0;">)</span>
<span class="t" style="left:217px;top:406.00px;font-size:30px;line-height:30px;color:#800000;letter-spacing:0px;font-weight:bold;transform:scaleX(1.0);transform-origin:0 0;">3</span>
<span class="t" style="left:234px;top:408.00px;font-size:30px;line-height:30px;color:#800000;letter-spacing:0px;font-weight:bold;transform:scaleX(0.92);transform-origin:0 0;">)</span>
<span class="t" style="left:320px;top:586.00px;font-size:30px;line-height:30px;color:#800000;letter-spacing:0px;font-weight:bold;transform:scaleX(1.0);transform-origin:0 0;">4</span>
<span class="t" style="left:338px;top:588.00px;font-size:30px;line-height:30px;color:#800000;letter-spacing:0px;font-weight:bold;transform:scaleX(0.92);transform-origin:0 0;">)</span>
<span class="t" style="left:612px;top:611.00px;font-size:30px;line-height:30px;color:#800000;letter-spacing:0px;font-weight:bold;transform:scaleX(1.0);transform-origin:0 0;">5</span>
<span class="t" style="left:629px;top:613.00px;font-size:30px;line-height:30px;color:#800000;letter-spacing:0px;font-weight:bold;transform:scaleX(0.92);transform-origin:0 0;">)</span>
<span class="t" style="left:924px;top:829.00px;font-size:30px;line-height:30px;color:#800000;letter-spacing:0px;font-weight:bold;transform:scaleX(1.0);transform-origin:0 0;">6</span>
<span class="t" style="left:941px;top:831.00px;font-size:30px;line-height:30px;color:#800000;letter-spacing:0px;font-weight:bold;transform:scaleX(0.92);transform-origin:0 0;">)</span>
</body></html>
